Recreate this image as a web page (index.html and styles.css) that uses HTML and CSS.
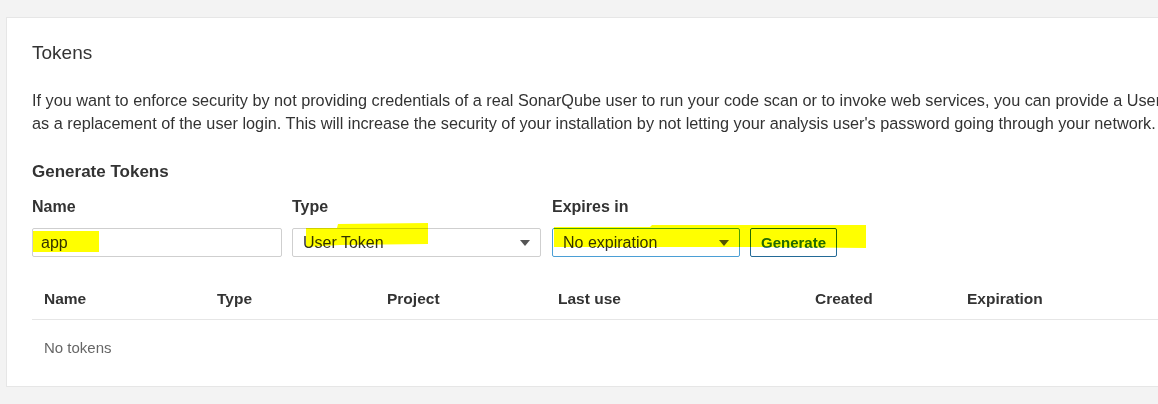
FILE: index.html
```html
<!DOCTYPE html>
<html lang="en">
<head>
    <meta charset="UTF-8">
    <meta name="viewport" content="width=device-width, initial-scale=1.0">
    <link rel="stylesheet" href="styles.css">
    <title>Tokens</title>
</head>
<body>
    <div class="boxed-group">
        <h2 class="title">Tokens</h2>
        <p class="intro">If you want to enforce security by not providing credentials of a real SonarQube user to run your code scan or to invoke web services, you can provide a User Token<br>as a replacement of the user login. This will increase the security of your installation by not letting your analysis user's password going through your network.</p>

        <h3 class="subtitle">Generate Tokens</h3>
        <form class="token-form">
            <div class="field name-field">
                <label>Name</label>
                <input class="input" type="text" value="app">
            </div>
            <div class="field type-field">
                <label>Type</label>
                <div class="select">
                    <span>User Token</span>
                    <svg class="caret" width="10" height="6" viewBox="0 0 10 6"><path d="M0 0h10L5 6z" fill="#555"/></svg>
                </div>
            </div>
            <div class="field expires-field">
                <label>Expires in</label>
                <div class="select focused">
                    <span>No expiration</span>
                    <svg class="caret" width="10" height="6" viewBox="0 0 10 6"><path d="M0 0h10L5 6z" fill="#555"/></svg>
                </div>
            </div>
            <button class="button" type="button">Generate</button>
        </form>

        <table class="data">
            <colgroup>
                <col style="width: 173px">
                <col style="width: 170px">
                <col style="width: 171px">
                <col style="width: 257px">
                <col style="width: 152px">
                <col>
            </colgroup>
            <thead>
                <tr>
                    <th>Name</th>
                    <th>Type</th>
                    <th>Project</th>
                    <th>Last use</th>
                    <th>Created</th>
                    <th>Expiration</th>
                </tr>
            </thead>
            <tbody>
                <tr>
                    <td class="note" colspan="6">No tokens</td>
                </tr>
            </tbody>
        </table>

        <!-- marker strokes drawn over the form -->
        <svg class="marker" width="1158" height="404" viewBox="0 0 1158 404">
            <g fill="#ffff00" transform="translate(-7 -18)">
                <polygon points="33,231 99,231 99,252 33,252"/>
                <polygon points="306,228 337,228 338,224 428,223 428,244 340,245 306,247"/>
                <polygon points="554,227 650,227 652,225 866,225 866,248 760,247 652,247 554,247"/>
            </g>
        </svg>
    </div>
</body>
</html>
```

FILE: styles.css
```css
html, body {
    margin: 0;
    height: 100%;
    overflow: hidden;
}

body {
    font-family: 'Liberation Sans', Arial, sans-serif;
    background-color: #f3f3f3;
    color: #333;
}

.boxed-group {
    position: relative;
    margin: 17px 0 0 6px;
    width: 1300px;
    padding: 23px 25px 14px 25px;
    background-color: #fff;
    border: 1px solid #e6e6e6;
    box-sizing: border-box;
}

.title {
    margin: 0;
    font-size: 19px;
    line-height: 24px;
    font-weight: normal;
}

.intro {
    margin: 24px 0 0;
    font-size: 16.25px;
    line-height: 23px;
    white-space: nowrap;
}

.subtitle {
    margin: 26px 0 0;
    font-size: 17px;
    line-height: 22px;
    font-weight: bold;
}

.token-form {
    display: flex;
    align-items: flex-end;
    gap: 10px;
    margin-top: 14px;
}

.field {
    display: flex;
    flex-direction: column;
}

.field label {
    font-size: 16px;
    line-height: 20px;
    font-weight: bold;
    margin-bottom: 11px;
}

.name-field {
    width: 250px;
}

.type-field {
    width: 249px;
}

.expires-field {
    width: 188px;
    margin-left: 1px;
}

.input,
.select {
    height: 29px;
    box-sizing: border-box;
    border: 1px solid #cfcfcf;
    border-radius: 2px;
    font-family: inherit;
    font-size: 16px;
    color: #333;
    background-color: #fff;
}

.input {
    padding: 0 8px;
    width: 100%;
    margin: 0;
}

.select {
    display: flex;
    align-items: center;
    padding: 0 10px;
}

.select .caret {
    margin-left: auto;
}

.select.focused {
    border-color: #4b9fd5;
}

.button {
    width: 87px;
    height: 29px;
    box-sizing: border-box;
    border: 1px solid #236a97;
    border-radius: 2px;
    background-color: #fff;
    color: #236a97;
    font-family: inherit;
    font-size: 15px;
    font-weight: bold;
    padding: 0;
}

.data {
    margin-top: 20px;
    width: 100%;
    border-collapse: collapse;
    table-layout: fixed;
}

.data th {
    text-align: left;
    font-size: 15.5px;
    line-height: 20px;
    font-weight: bold;
    padding: 12px 12px 10px;
    border-bottom: 1px solid #e6e6e6;
}

.data td {
    font-size: 15px;
    line-height: 20px;
    padding: 18px 12px 14px;
}

.data .note {
    color: #666;
}

.marker {
    position: absolute;
    left: 0;
    top: 0;
    mix-blend-mode: multiply;
    pointer-events: none;
}
```
